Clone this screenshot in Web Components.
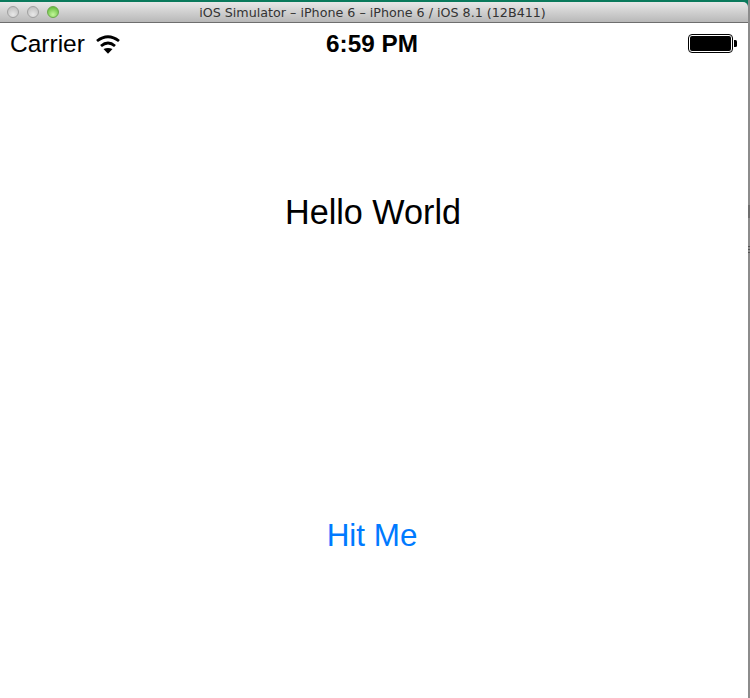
<!DOCTYPE html>
<html>
<head>
<meta charset="utf-8">
<title>iOS Simulator</title>
<style>
  html, body { margin: 0; height: 100%; background: #fff; overflow: hidden; }
  body { font-family: "Liberation Sans", Arial, sans-serif; }
</style>
</head>
<body>
<sim-window title-text="iOS Simulator – iPhone 6 – iPhone 6 / iOS 8.1 (12B411)">
  <status-bar carrier="Carrier" time="6:59 PM"></status-bar>
  <hello-screen></hello-screen>
</sim-window>

<script>
class SimWindow extends HTMLElement {
  constructor() {
    super();
    this.attachShadow({ mode: "open" });
    const title = this.getAttribute("title-text");
    this.shadowRoot.innerHTML = `
      <style>
        :host {
          display: flex;
          flex-direction: column;
          width: 750px;
          height: 698px;
          box-sizing: border-box;
          border-right: 2px solid #8c8c8c;
          position: relative;
        }
        .top {
          background: #0a7a5c;
          padding-top: 2px;
        }
        .titlebar {
          display: flex;
          align-items: center;
          height: 20px;
          padding-left: 6.500px;
          background: linear-gradient(#e8e8e8, #b8b8b8);
          border-bottom: 1px solid #6e6e6e;
          border-top-right-radius: 5px;
        }
        .lights { display: flex; gap: 8px; }
        .light {
          width: 12px;
          height: 12px;
          box-sizing: border-box;
          border-radius: 50%;
          border: 1px solid #a0a0a0;
          background: radial-gradient(circle at 50% 75%, #e8e8e8, #b8b8b8);
        }
        .light.zoom {
          border-color: #6aa84a;
          background: radial-gradient(circle at 50% 75%, #c4f79a, #52b02c);
        }
        .title {
          flex: 1;
          text-align: center;
          font: 12.700px "DejaVu Sans", "Liberation Sans", sans-serif;
          color: #333;
          padding-right: 61.500px;
          white-space: nowrap;
        }
        .content { flex: 1; display: flex; flex-direction: column; min-height: 0; }
        .tick {
          position: absolute;
          right: -2px;
          width: 2px;
          background: #555;
        }
        .tick.a { top: 205px; height: 13px; background: #6e6e6e; }
        .tick.b { top: 246px; height: 1px; }
        .tick.c { top: 249px; height: 1px; }
        .tick.d { top: 252px; height: 1px; }
      </style>
      <div class="top">
        <div class="titlebar">
          <div class="lights">
            <span class="light"></span>
            <span class="light"></span>
            <span class="light zoom"></span>
          </div>
          <div class="title">${title}</div>
        </div>
      </div>
      <div class="content"><slot></slot></div>
      <span class="tick a"></span>
      <span class="tick b"></span>
      <span class="tick c"></span>
      <span class="tick d"></span>
    `;
  }
}

class StatusBar extends HTMLElement {
  constructor() {
    super();
    this.attachShadow({ mode: "open" });
    const carrier = this.getAttribute("carrier");
    const time = this.getAttribute("time");
    this.shadowRoot.innerHTML = `
      <style>
        :host {
          display: grid;
          grid-template-columns: 1fr auto 1fr;
          align-items: center;
          height: 41px;
          padding: 0 10px 0 10px;
          font-family: "Liberation Sans", Arial, sans-serif;
          color: #000;
        }
        .left { display: flex; align-items: center; gap: 11px; font-size: 24.500px; }
        .time { font-size: 24.300px; font-weight: bold; margin-left: -4px; }
        .right { display: flex; justify-content: flex-end; }
        svg { display: block; }
      </style>
      <div class="left">
        <span>${carrier}</span>
        <svg width="24" height="20" viewBox="0 0 24 20">
          <path d="M1 7Q12-1.500 23 7" fill="none" stroke="#000" stroke-width="2.800"/>
          <path d="M5 12Q12 6 19 12" fill="none" stroke="#000" stroke-width="2.800"/>
          <path d="M7.500 15Q12 13 16.500 15L12 19.800Z" fill="#000"/>
        </svg>
      </div>
      <div class="time">${time}</div>
      <div class="right">
        <svg width="50" height="19" viewBox="0 0 50 19">
          <rect x=".5" y=".5" width="44" height="18" rx="3.500" fill="#fff" stroke="#000"/>
          <rect x="2" y="2" width="41" height="15" rx="2" fill="#000"/>
          <path d="M46 6h1.500a1.500 1.500 0 0 1 1.500 1.500v4a1.500 1.500 0 0 1-1.500 1.500H46z" fill="#000"/>
        </svg>
      </div>
    `;
  }
}

class HelloScreen extends HTMLElement {
  constructor() {
    super();
    this.attachShadow({ mode: "open" });
    this.shadowRoot.innerHTML = `
      <style>
        :host {
          display: flex;
          flex-direction: column;
          align-items: center;
          flex: 1;
          padding: 128px 2px 0 0;
          gap: 284px;
          font-family: "Liberation Sans", Arial, sans-serif;
        }
        .label { font-size: 34.200px; line-height: 40px; color: #000; }
        button {
          all: unset;
          font-size: 31.400px;
          line-height: 40px;
          color: #007aff;
          margin-right: 2px;
        }
      </style>
      <div class="label">Hello World</div>
      <button>Hit Me</button>
    `;
  }
}

customElements.define("sim-window", SimWindow);
customElements.define("status-bar", StatusBar);
customElements.define("hello-screen", HelloScreen);
</script>
</body>
</html>
